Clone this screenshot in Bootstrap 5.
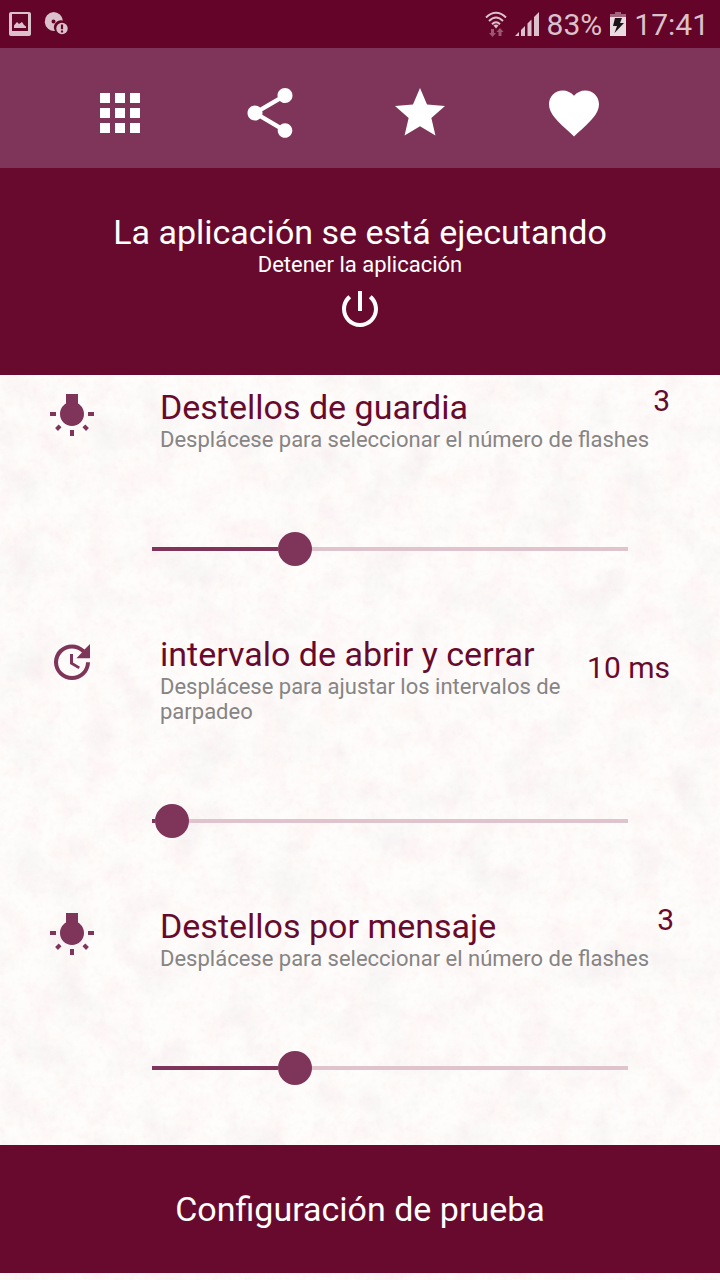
<!DOCTYPE html>
<html lang="es">
<head>
<meta charset="utf-8">
<meta name="viewport" content="width=device-width, initial-scale=1">
<title>Alertas de flash</title>
<link rel="stylesheet" href="https://cdn.jsdelivr.net/npm/bootstrap@5.3.0/dist/css/bootstrap.min.css">
<style>
:root {
  --wine: #680a2d;
  --wine-dark: #640428;
  --plum: #7e3559;
}
body {
  font-family: Roboto, sans-serif;
  font-size: 22px;
  line-height: 25px;
  color: var(--wine);
  background-color: #fefdfb;
  /* faint floral paper: pink and grey mottling */
  background-image: url("data:image/svg+xml,%3Csvg xmlns='http://www.w3.org/2000/svg' width='720' height='720'%3E%3Cfilter id='a' x='0' y='0' width='1' height='1'%3E%3CfeTurbulence type='fractalNoise' baseFrequency='.035' numOctaves='4' seed='4' stitchTiles='stitch'/%3E%3CfeColorMatrix values='0 0 0 0 .95 0 0 0 0 .55 0 0 0 0 .62 .3 0 0 0 -.12'/%3E%3C/filter%3E%3Cfilter id='b' x='0' y='0' width='1' height='1'%3E%3CfeTurbulence type='fractalNoise' baseFrequency='.022' numOctaves='4' seed='11' stitchTiles='stitch'/%3E%3CfeColorMatrix values='0 0 0 0 .5 0 0 0 0 .5 0 0 0 0 .58 0 .24 0 0 -.115'/%3E%3C/filter%3E%3Cfilter id='c' x='0' y='0' width='1' height='1'%3E%3CfeTurbulence type='fractalNoise' baseFrequency='.16' numOctaves='2' seed='7' stitchTiles='stitch'/%3E%3CfeColorMatrix values='0 0 0 0 .8 0 0 0 0 .6 0 0 0 0 .62 0 0 .25 0 -.12'/%3E%3C/filter%3E%3Crect width='720' height='720' filter='url(%23a)'/%3E%3Crect width='720' height='720' filter='url(%23b)'/%3E%3Crect width='720' height='720' filter='url(%23c)'/%3E%3C/svg%3E");
}
svg { display: block; fill: currentColor; flex: none; }
.status-bar { height: 48px; padding: 0 11px 0 8px; background: var(--wine-dark); color: #dcc1cc; font-size: 30px; line-height: 48px; }
.status-text { padding-top: 2px; }
.toolbar { background: var(--plum); padding: 35px 75px 25px 45px; }
.tool-btn { color: #fff; }
.run-panel { background: var(--wine); padding: 45px 0 42px; }
.title-text { font-size: 34px; line-height: 39px; font-weight: 400; }
.setting-row { padding: 0 46px 0 48px; }
.setting-info { margin: -3px 0 0 64px; }
.setting-hint { color: #868484; }
.setting-value { font-size: 30px; line-height: 36px; margin-top: -8px; }
.value-centered { margin-top: 12px; }
.slider-wrap { padding: 80px 75px 72px 135px; }
.flash-range {
  --pos: calc(17px + (100% - 34px) * var(--share));
  appearance: none; -webkit-appearance: none;
  display: block; width: 100%; height: 34px; margin: 0; background: none;
}
.flash-range::-webkit-slider-runnable-track {
  height: 34px;
  background: linear-gradient(90deg, transparent 17px, var(--plum) 17px, var(--plum) calc(var(--pos) - 17px), transparent calc(var(--pos) - 17px), transparent var(--pos), #dfc4ce var(--pos), #dfc4ce calc(100% - 17px), transparent calc(100% - 17px)) center / 100% 4px no-repeat;
}
.flash-range::-webkit-slider-thumb { -webkit-appearance: none; width: 34px; height: 34px; border: 0; border-radius: 50%; background: var(--plum); }
.flash-range::-moz-range-track { height: 4px; background: #dfc4ce; }
.flash-range::-moz-range-thumb { width: 34px; height: 34px; border: 0; border-radius: 50%; background: var(--plum); }
.icon-tone { color: var(--plum); }
.last-slider { padding-bottom: 60px; }
.test-btn { background: var(--wine); padding: 45px 0 44px; }
</style>
</head>
<body>
<div class="status-bar d-flex align-items-center">
  <svg width="24" height="26" viewBox="0 0 24 26" role="img" aria-label="Imagen"><path fill-rule="evenodd" d="M3 1h18q2 0 2 2v20q0 2-2 2H3q-2 0-2-2V3q0-2 2-2zm1 2v17h16V3zM6 17v-2.500l3-3.500 2 2 3-2 2 3 2 1.500V17z"/></svg>
  <svg class="ms-2" width="28" height="26" viewBox="0 0 28 26" role="img" aria-label="Aviso de almacenamiento"><path fill-rule="evenodd" d="M13.500 1a9.500 9.500 0 0 1 9.400 8.600A7 7 0 0 0 15 20A9.500 9.500 0 1 1 13.500 1zm0 7.500a2 2 0 1 0 0 4 2 2 0 0 0 0-4z"/><circle cx="22" cy="17.500" r="5.700"/><path d="M20.900 13.500h2.200v4.800h-2.200zm0 6h2.200v2h-2.200z" fill="#620427"/></svg>
  <div class="d-flex align-items-center ms-auto">
    <svg width="22" height="26" viewBox="0 0 22 26" role="img" aria-label="Wi-Fi"><g fill="none" stroke="currentColor" stroke-width="2"><path d="M1 6.500Q11-3 21 6.500M4 10Q11 3 18 10M7 13.300Q11 9 15 13.300"/></g><path d="M8.500 14.500Q11 12.500 13.500 14.500L11 17.500z"/><path opacity=".45" d="M6 18h3v4h2l-3.500 4L4 22h2zM13.500 25h3v-4h2L15 17l-3.500 4h2z"/></svg>
    <svg class="ms-2" width="24" height="26" viewBox="0 0 24 26" role="img" aria-label="Cobertura"><path d="M0 25l4-4v4zM6 25v-6l4-4v10zM12.500 25V12.500l4-4V25zM19 25V6l5-5v24z"/></svg>
    <span class="status-text ms-2">83%</span>
    <svg class="mx-2" width="16" height="24" viewBox="0 0 16 24" role="img" aria-label="Cargando"><path fill="#a2647d" d="M0 5V2h5V0h6v2h5v3z"/><path fill="#eadbe1" d="M0 5h16v19H0z"/><path fill="#1d1419" d="M5 6h7l-2 5h4L4.500 21 7 14H3z"/></svg>
    <span class="status-text">17:41</span>
  </div>
</div>

<nav class="toolbar d-flex" aria-label="Acciones">
  <div class="col-3 d-flex justify-content-center"><button type="button" class="tool-btn btn p-0 border-0" aria-label="Más aplicaciones"><svg width="60" height="60" viewBox="0 0 24 24"><path d="M4 8h4V4H4v4zm6 12h4v-4h-4v4zm-6 0h4v-4H4v4zm0-6h4v-4H4v4zm6 0h4v-4h-4v4zm6-10v4h4V4h-4zm-6 4h4V4h-4v4zm6 6h4v-4h-4v4zm0 6h4v-4h-4v4z"/></svg></button></div>
  <div class="col-3 d-flex justify-content-center"><button type="button" class="tool-btn btn p-0 border-0" aria-label="Compartir"><svg width="60" height="60" viewBox="0 0 24 24"><path d="M18 16.080c-.76 0-1.440.3-1.960.77L8.910 12.700c.05-.23.09-.46.09-.7s-.04-.47-.09-.7l7.050-4.110c.54.5 1.250.81 2.040.81 1.660 0 3-1.340 3-3s-1.340-3-3-3-3 1.340-3 3c0 .24.04.47.09.7L8.040 9.810C7.500 9.310 6.790 9 6 9c-1.660 0-3 1.340-3 3s1.340 3 3 3c.79 0 1.500-.31 2.040-.81l7.120 4.160c-.05.21-.08.43-.08.65 0 1.610 1.310 2.920 2.920 2.920s2.920-1.310 2.920-2.920-1.310-2.920-2.920-2.920z"/></svg></button></div>
  <div class="col-3 d-flex justify-content-center"><button type="button" class="tool-btn btn p-0 border-0" aria-label="Valorar"><svg width="60" height="60" viewBox="0 0 24 24"><path d="M12 17.270L18.180 21l-1.640-7.030L22 9.240l-7.190-.61L12 2 9.190 8.630 2 9.240l5.460 4.730L5.820 21z"/></svg></button></div>
  <div class="col-3 d-flex justify-content-center ps-2"><button type="button" class="tool-btn btn p-0 border-0" aria-label="Favoritos"><svg width="60" height="60" viewBox="0 0 24 24"><path d="M12 21.350l-1.450-1.320C5.400 15.360 2 12.280 2 8.500 2 5.420 4.420 3 7.500 3c1.740 0 3.410.81 4.500 2.090C13.090 3.810 14.760 3 16.500 3 19.580 3 22 5.420 22 8.500c0 3.780-3.400 6.860-8.550 11.540L12 21.350z"/></svg></button></div>
</nav>

<header class="run-panel text-white text-center">
  <h1 class="title-text m-0">La aplicación se está ejecutando</h1>
  <p class="m-0" id="stop-label">Detener la aplicación</p>
  <button type="button" class="btn p-0 border-0 text-white mt-2" aria-labelledby="stop-label"><svg width="48" height="48" viewBox="0 0 24 24"><path d="M13 3h-2v10h2V3zm4.830 2.170l-1.420 1.420C17.990 7.860 19 9.810 19 12c0 3.870-3.130 7-7 7s-7-3.130-7-7c0-2.190 1.010-4.140 2.580-5.420L6.170 5.170C4.230 6.820 3 9.260 3 12c0 4.970 4.030 9 9 9s9-4.030 9-9c0-2.740-1.230-5.180-3.170-6.830z"/></svg></button>
</header>

<main class="pt-3">
  <section>
    <div class="setting-row d-flex align-items-start">
      <svg class="icon-tone" width="48" height="48" viewBox="0 0 24 24" aria-hidden="true"><path id="bulb" d="M3.550 18.540l1.410 1.410 1.800-1.790-1.410-1.410-1.800 1.790zM11 22.450h2V19.500h-2v2.950zM4 10.500H1v2h3v-2zm11-4.190V1.500H9v4.810C7.210 7.350 6 9.280 6 11.500c0 3.310 2.690 6 6 6s6-2.690 6-6c0-2.220-1.210-4.150-3-5.190zm5 4.190v2h3v-2h-3zm-2.760 7.660l1.790 1.800 1.410-1.410-1.800-1.790-1.400 1.400z"/></svg>
      <div class="setting-info flex-fill">
        <label class="title-text d-block" for="call-flashes">Destellos de guardia</label>
        <div class="setting-hint">Desplácese para seleccionar el número de flashes</div>
      </div>
      <output class="setting-value text-nowrap me-1" for="call-flashes">3</output>
    </div>
    <div class="slider-wrap"><input type="range" class="flash-range" id="call-flashes" min="0" max="10" value="3" style="--share:.3"></div>
  </section>

  <section>
    <div class="setting-row d-flex align-items-start">
      <svg class="icon-tone" width="48" height="48" viewBox="0 0 24 24" aria-hidden="true"><path d="M21 10.120h-6.780l2.740-2.820c-2.730-2.700-7.150-2.800-9.880-.1-2.730 2.710-2.730 7.080 0 9.790s7.150 2.710 9.880 0C18.320 15.650 19 14.080 19 12.100h2c0 1.980-.88 4.550-2.640 6.290-3.510 3.480-9.210 3.480-12.720 0-3.500-3.470-3.530-9.110-.02-12.580s9.140-3.470 12.650 0L21 3v7.120zM12.500 8v4.250l3.500 2.080-.72 1.210L11 13V8h1.500z"/></svg>
      <div class="setting-info flex-fill">
        <label class="title-text d-block" for="interval">intervalo de abrir y cerrar</label>
        <div class="setting-hint">Desplácese para ajustar los intervalos de parpadeo</div>
      </div>
      <output class="setting-value value-centered text-nowrap me-1" for="interval">10 ms</output>
    </div>
    <div class="slider-wrap"><input type="range" class="flash-range" id="interval" min="0" max="240" value="10" style="--share:.0417"></div>
  </section>

  <section>
    <div class="setting-row d-flex align-items-start">
      <svg class="icon-tone" width="48" height="48" viewBox="0 0 24 24" aria-hidden="true"><use href="#bulb"/></svg>
      <div class="setting-info flex-fill">
        <label class="title-text d-block" for="sms-flashes">Destellos por mensaje</label>
        <div class="setting-hint">Desplácese para seleccionar el número de flashes</div>
      </div>
      <output class="setting-value text-nowrap" for="sms-flashes">3</output>
    </div>
    <div class="slider-wrap last-slider"><input type="range" class="flash-range" id="sms-flashes" min="0" max="10" value="3" style="--share:.3"></div>
  </section>
</main>

<footer>
  <button type="button" class="test-btn title-text btn w-100 rounded-0 border-0 text-white">Configuración de prueba</button>
</footer>
<script src="https://cdn.jsdelivr.net/npm/bootstrap@5.3.0/dist/js/bootstrap.bundle.min.js"></script>
</body>
</html>
